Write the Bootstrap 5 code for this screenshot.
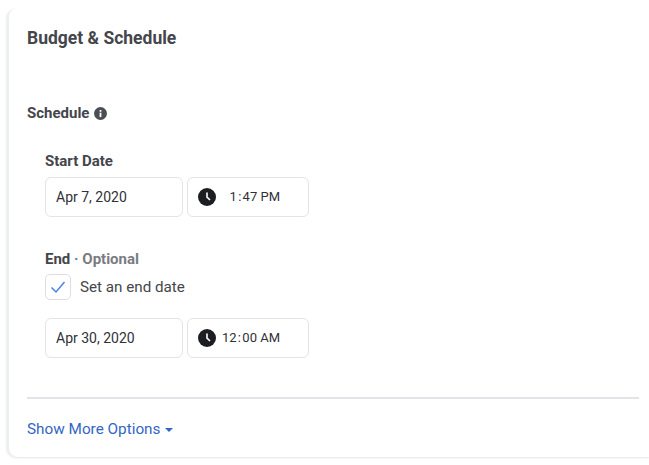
<!DOCTYPE html>
<html lang="en">
<head>
    <meta charset="UTF-8">
    <meta name="viewport" content="width=device-width, initial-scale=1.0">
    <title>Budget &amp; Schedule</title>
    <link rel="stylesheet" href="https://cdn.jsdelivr.net/npm/bootstrap@5.3.0/dist/css/bootstrap.min.css">
    <style>
        body {
            background: #fff;
            font-family: Roboto, "Liberation Sans", sans-serif;
            color: #44464b;
            overflow: hidden;
        }
        .page-wrap {
            padding: 8px 0 0 9px;
            height: 465px;
        }
        .panel {
            height: 449px;
            padding: 18px 10px 0 18px;
            border-radius: 9px 0 0 9px;
            background: #fff;
            box-shadow: -3px 1px 2px #eceef0, 0 1px 2px #e4e6e9;
        }
        .panel-title {
            font-size: 17.5px;
            font-weight: 700;
            line-height: 24px;
            margin: 0 0 53px;
        }
        .section-title {
            font-size: 15px;
            font-weight: 700;
            line-height: 20px;
            margin-bottom: 28px;
        }
        .info-icon { margin-left: 1px; }
        .form-area { padding-left: 18px; }
        .field-label {
            font-size: 15px;
            font-weight: 700;
            line-height: 20px;
            margin-bottom: 6px;
        }
        .optional-text { color: #7a7c81; }
        .field-box {
            height: 40px;
            border: 1px solid #e3e4e7;
            border-radius: 6px;
            font-size: 14px;
            color: #2f3136;
        }
        .date-box { width: 138px; padding-left: 10px; }
        .time-box { width: 122px; padding-left: 10px; font-size: 13px; }
        .time-text { width: 64px; white-space: nowrap; text-align: right; }
        .check-box {
            width: 26px;
            height: 26px;
            border: 1px solid #dcdee2;
            border-radius: 5px;
        }
        .check-label { font-size: 15.2px; margin-left: 1px; padding-top: 1px; }
        .end-block { margin-top: 32px; }
        .end-block .field-label { margin-bottom: 5px; }
        .check-row { margin-bottom: 18px; }
        .panel-rule {
            height: 2px;
            background: #e2e4ea;
            margin: 39px 0 0;
        }
        .more-link {
            display: inline-flex;
            margin-top: 20px;
            font-size: 15.3px;
            line-height: 20px;
            color: #3366c4;
            text-decoration: none;
        }
        .more-caret { margin-left: 1px; margin-top: 2px; }
    </style>
</head>
<body>

<div class="page-wrap">
    <div class="panel">
        <h2 class="panel-title">Budget &amp; Schedule</h2>

        <div class="section-title d-flex align-items-center gap-1">
            Schedule
            <svg class="info-icon" width="13" height="13" viewBox="0 0 16 16">
                <circle cx="8" cy="8" r="8" fill="#4b4e54"/>
                <rect x="6.9" y="7" width="2.2" height="5.4" fill="#fff"/>
                <rect x="6.9" y="3.7" width="2.2" height="2.2" fill="#fff"/>
            </svg>
        </div>

        <div class="form-area">
            <div class="field-label">Start Date</div>
            <div class="d-flex gap-1">
                <div class="field-box date-box d-flex align-items-center">Apr 7, 2020</div>
                <div class="field-box time-box d-flex align-items-center">
                    <svg width="18" height="18" viewBox="0 0 18 18">
                        <circle cx="9" cy="9" r="9" fill="#1c1e21"/>
                        <path d="M9 4.5V9.2L12 12" fill="none" stroke="#fff" stroke-width="1.6"/>
                    </svg>
                    <span class="time-text">1&#8202;:&#8202;47 PM</span>
                </div>
            </div>

            <div class="end-block">
                <div class="field-label">End <span class="optional-text">· Optional</span></div>
                <div class="check-row d-flex align-items-center gap-2">
                    <div class="check-box d-flex align-items-center justify-content-center">
                        <svg width="16" height="14" viewBox="0 0 16 14">
                            <path d="M1.5 7.5L6 12L14.5 2" fill="none" stroke="#4a80e8" stroke-width="1.5"/>
                        </svg>
                    </div>
                    <span class="check-label">Set an end date</span>
                </div>
                <div class="d-flex gap-1">
                    <div class="field-box date-box d-flex align-items-center">Apr 30, 2020</div>
                    <div class="field-box time-box d-flex align-items-center">
                        <svg width="18" height="18" viewBox="0 0 18 18">
                            <circle cx="9" cy="9" r="9" fill="#1c1e21"/>
                            <path d="M9 4.5V9.2L12 12" fill="none" stroke="#fff" stroke-width="1.6"/>
                        </svg>
                        <span class="time-text">12&#8202;:&#8202;00 AM</span>
                    </div>
                </div>
            </div>
        </div>

        <div class="panel-rule"></div>
        <a href="#" class="more-link align-items-center gap-1">
            Show More Options
            <svg class="more-caret" width="8" height="4" viewBox="0 0 8 4"><path d="M0 0H8L4 4Z" fill="#3366c4"/></svg>
        </a>
    </div>
</div>

<script src="https://cdn.jsdelivr.net/npm/bootstrap@5.3.0/dist/js/bootstrap.bundle.min.js"></script>
</body>
</html>
